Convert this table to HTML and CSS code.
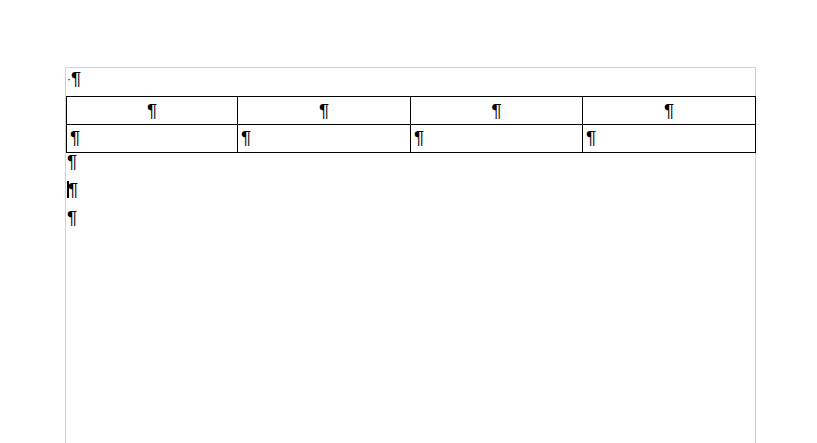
FILE: index.html
```html
<!DOCTYPE html>
<html>
<head>
<meta charset="utf-8">
<link rel="stylesheet" href="styles.css">
</head>
<body>
<div class="page">
  <p class="para first"><span class="dot">·</span><span class="pil">¶</span></p>
  <table class="grid">
    <tr class="head">
      <td class="c1"><span class="pil">¶</span></td>
      <td class="c2"><span class="pil">¶</span></td>
      <td class="c3"><span class="pil">¶</span></td>
      <td class="c4"><span class="pil">¶</span></td>
    </tr>
    <tr class="body">
      <td><span class="pil">¶</span></td>
      <td><span class="pil">¶</span></td>
      <td><span class="pil">¶</span></td>
      <td><span class="pil">¶</span></td>
    </tr>
  </table>
  <p class="para"><span class="pil">¶</span></p>
  <p class="para"><span class="caret"></span><span class="pil">¶</span></p>
  <p class="para"><span class="pil">¶</span></p>
</div>
</body>
</html>
```
FILE: styles.css
```css
html, body {
  margin: 0;
  padding: 0;
  background: #ffffff;
  overflow: hidden;
}
body {
  font-family: "Liberation Sans", Arial, sans-serif;
  color: #000;
}
.page {
  margin: 67px 0 0 65px;
  width: 689px;
  height: 400px;
  border: 1px solid #d2d2d2;
  border-bottom: none;
}
.para {
  margin: 0;
  height: 28px;
  padding-left: 1px;
  display: flex;
  align-items: flex-start;
  box-sizing: border-box;
}
.first {
  padding-top: 2px;
}
.dot {
  font-size: 12px;
  line-height: 18px;
}
.pil {
  font-size: 19px;
  font-weight: normal;
  line-height: 18px;
  display: inline-block;
}
.caret {
  display: inline-block;
  width: 2px;
  height: 17px;
  background: #000;
  margin-right: -1px;
}
.grid {
  border-collapse: collapse;
  width: 689px;
  table-layout: fixed;
  margin: 0;
}
.grid td {
  border: 1px solid #000;
  padding: 0 0 0 3px;
  vertical-align: top;
  line-height: 1;
}
.grid .c1 { width: 170px; }
.grid .c2 { width: 172px; }
.grid .c3 { width: 171px; }
.grid .c4 { width: 172px; }
.grid .head td {
  text-align: center;
  padding: 5px 0 0 0;
  height: 22px;
}
.grid .body td {
  padding-top: 4px;
  height: 23px;
}
```
